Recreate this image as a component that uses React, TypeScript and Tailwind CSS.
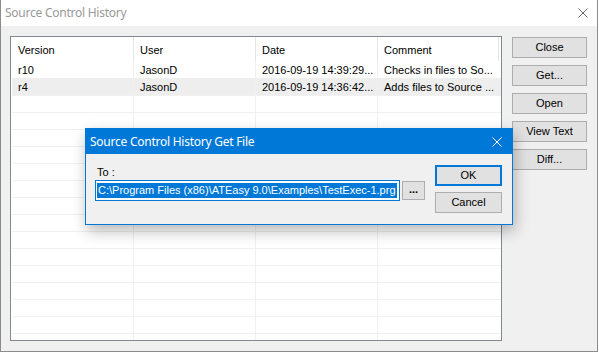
import React from 'react';

const rows = [
  { version: 'r10', user: 'JasonD', date: '2016-09-19 14:39:29...', comment: 'Checks in files to So...' },
  { version: 'r4', user: 'JasonD', date: '2016-09-19 14:36:42...', comment: 'Adds files to Source ...' },
];

const buttons = ['Close', 'Get...', 'Open', 'View Text', 'Diff...'];

const uiFont = { fontFamily: '"Liberation Sans", Arial, sans-serif' };
const titleFont = { fontFamily: '"Noto Sans", "Open Sans", sans-serif' };

const CloseX = ({ className }: { className: string }) => (
  <svg width="10" height="10" viewBox="0 0 10 10" className={className}>
    <path d="M0.5 0.5 L9.5 9.5 M9.5 0.5 L0.5 9.5" stroke="currentColor" strokeWidth="1" fill="none" />
  </svg>
);

export default function App() {
  const emptyRows = Array.from({ length: 15 });

  return (
    <div className="relative w-[599px] h-[352px] bg-white overflow-hidden" style={uiFont}>
      {/* main window */}
      <div className="flex flex-col w-[598px] h-[352px] border border-[#8c8c8c] border-t-0 bg-[#f0f0f0]">
        <div className="flex items-center h-[26px] bg-white pl-[4px] pr-[9px]">
          <span className="text-[12px] text-[#999999] tracking-[-0.25px]" style={titleFont}>Source Control History</span>
          <CloseX className="ml-auto text-[#6b6b6b]" />
        </div>

        <div className="flex flex-1 pt-[10px] pl-[9px] pb-[9px]">
          {/* list view */}
          <div className="flex flex-col w-[492px] h-[305px] border border-[#828790] bg-white pl-[1px] overflow-hidden">
            <div className="grid grid-cols-[122px_122px_122px_121px] h-[24px] text-[11px] text-black shrink-0">
              {['Version', 'User', 'Date', 'Comment'].map((h) => (
                <div key={h} className="flex items-center pl-[6px] border-r border-[#e5e5e5] pt-[3px]">{h}</div>
              ))}
            </div>
            {rows.map((r, i) => (
              <div
                key={r.version}
                className={`grid grid-cols-[122px_122px_122px_121px] h-[17px] text-[11px] text-black shrink-0 ${i === 1 ? 'bg-[#eeeeee]' : ''}`}
              >
                <div className="flex items-center pl-[6px] pt-[1px] border-r border-[#f0f0f0]">{r.version}</div>
                <div className="flex items-center pl-[6px] pt-[1px] border-r border-[#f0f0f0]">{r.user}</div>
                <div className="flex items-center pl-[6px] pt-[1px] border-r border-[#f0f0f0]">{r.date}</div>
                <div className="flex items-center pl-[6px] pt-[1px] whitespace-nowrap overflow-hidden">{r.comment}</div>
              </div>
            ))}
            {emptyRows.map((_, i) => (
              <div key={i} className="grid grid-cols-[122px_122px_122px_121px] h-[17px] shrink-0 border-t border-[#f0f0f0]">
                <div className="border-r border-[#f0f0f0]" />
                <div className="border-r border-[#f0f0f0]" />
                <div className="border-r border-[#f0f0f0]" />
                <div />
              </div>
            ))}
          </div>

          {/* side buttons */}
          <div className="flex flex-col gap-[7px] ml-[10px] pt-[1px]">
            {buttons.map((b) => (
              <div
                key={b}
                className="flex items-center justify-center w-[75px] h-[21px] bg-[#e1e1e1] border border-[#adadad] text-[11px] text-black"
              >
                {b}
              </div>
            ))}
          </div>
        </div>
      </div>

      {/* Get File dialog */}
      <div className="absolute left-[85px] top-[128px] w-[428px] h-[97px] flex flex-col border border-[#0078d7] bg-[#f0f0f0] shadow-[2px_6px_14px_rgba(0,0,0,0.28)]">
        <div className="flex items-center h-[25px] bg-[#0078d7] pl-[4px] pr-[10px] shrink-0">
          <span className="text-[12px] text-white tracking-[-0.25px]" style={titleFont}>Source Control History Get File</span>
          <CloseX className="ml-auto text-white" />
        </div>
        <div className="flex flex-1 pl-[9px] pr-[10px]">
          <div className="flex flex-col pt-[12px]">
            <span className="text-[11px] text-black leading-[13px] pl-[2px]">To :</span>
            <div className="flex items-center mt-[1px]">
              <div className="flex items-center w-[305px] h-[21px] border border-[#0078d7] bg-white px-[1px]">
                <span className="bg-[#0078d7] text-white text-[11px] leading-[15px] px-[1px] whitespace-nowrap">
                  C:\Program Files (x86)\ATEasy 9.0\Examples\TestExec-1.prg
                </span>
              </div>
              <div className="flex items-center justify-center w-[23px] h-[19px] ml-[2px] bg-[#e1e1e1] border border-[#adadad] text-[11px] font-bold text-black leading-none pb-[3px]">
                ...
              </div>
            </div>
          </div>
          <div className="flex flex-col gap-[6px] ml-auto pt-[11px]">
            <div className="flex items-center justify-center w-[67px] h-[21px] bg-[#e1e1e1] border-2 border-[#0078d7] text-[11px] text-black">
              OK
            </div>
            <div className="flex items-center justify-center w-[67px] h-[21px] bg-[#e1e1e1] border border-[#adadad] text-[11px] text-black">
              Cancel
            </div>
          </div>
        </div>
      </div>
    </div>
  );
}
